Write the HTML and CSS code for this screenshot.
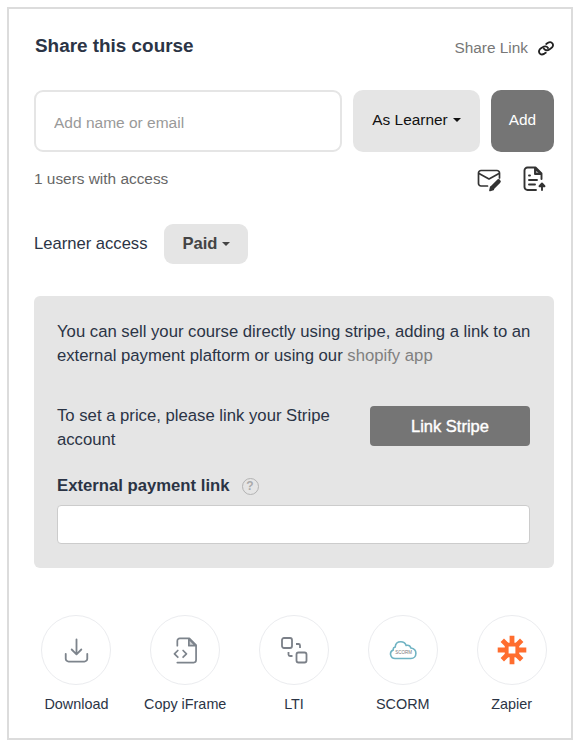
FILE: index.html
```html
<!DOCTYPE html>
<html lang="en">
<head>
    <meta charset="UTF-8">
    <meta name="viewport" content="width=device-width, initial-scale=1.0">
    <title>Share this course</title>
    <link rel="stylesheet" href="styles.css">
</head>
<body>
    <div class="share-card">
        <div class="header">
            <h1>Share this course</h1>
            <a class="share-link">
                <span>Share Link</span>
                <svg width="16" height="16" viewBox="0 0 24 24" fill="none" stroke="#222" stroke-width="2.8" stroke-linecap="round">
                    <path d="M9 13c1.500 2.600 5 3.200 8 1.200l2.500-1.700c3-2 3.800-5 2.200-7.300s-4.600-2.400-7.300-.6l-2 1.400"/>
                    <path d="M15 12c-1.500-2.600-5-3.200-8-1.200l-2.500 1.700c-3 2-3.800 5-2.200 7.300s4.600 2.400 7.300.6l2-1.400"/>
                </svg>
            </a>
        </div>

        <div class="invite">
            <input class="invite-input" type="text" placeholder="Add name or email">
            <button class="role-button">As Learner<span class="caret"></span></button>
            <button class="add-button">Add</button>
        </div>

        <div class="users">
            <span>1 users with access</span>
            <div class="users-actions">
                <svg width="26" height="26" viewBox="0 0 26 26" fill="none" stroke="#333" stroke-width="1.7" stroke-linecap="round" stroke-linejoin="round">
                    <path d="M11.500 20H5a2.500 2.500 0 0 1-2.500-2.500V7A2.500 2.500 0 0 1 5 4.500h16A2.500 2.500 0 0 1 23.500 7v5"/>
                    <path d="M3 7.500l10 5.500L23 7.500"/>
                    <path d="M16.500 21.500l6-6" stroke-width="4.500"/>
                    <path d="M14 24.500l.8-3.500 2.500 2.500z" fill="#333"/>
                </svg>
                <svg width="26" height="26" viewBox="0 0 26 26" fill="none" stroke="#333" stroke-width="1.9" stroke-linecap="round" stroke-linejoin="round">
                    <path d="M14 24H5.500a3 3 0 0 1-3-3V4.500a3 3 0 0 1 3-3h8l6 6v5.500"/>
                    <path d="M13 2v6h6z" fill="#333" fill-opacity=".5"/>
                    <path d="M7 9.500h1M7 14h8M7 18.500h6"/>
                    <path d="M20 24v-5"/>
                    <path d="M17.500 20.200l2.500-2.700 2.500 2.700z" fill="#333"/>
                </svg>
            </div>
        </div>

        <div class="access">
            <span>Learner access</span>
            <button class="access-button">Paid<span class="caret"></span></button>
        </div>

        <div class="payment">
            <p class="payment-info">You can sell your course directly using stripe, adding a link to an<br>external payment plaftorm or using our <a>shopify app</a></p>
            <div class="stripe">
                <p>To set a price, please link your Stripe<br>account</p>
                <button class="stripe-button">Link Stripe</button>
            </div>
            <div class="payment-label">
                <label for="payment-link">External payment link</label>
                <span class="help">?</span>
            </div>
            <input class="payment-input" id="payment-link" type="text">
        </div>

        <div class="exports">
            <div class="export-item">
                <div class="export-icon">
                    <svg width="25" height="26" viewBox="0 0 26 26" fill="none" stroke="#7d848c" stroke-width="1.900" stroke-linecap="round" stroke-linejoin="round">
                        <path d="M13 2v15M8 12.500l5 5 5-5"/>
                        <path d="M1.800 17v5a3 3 0 0 0 3 3h16.400a3 3 0 0 0 3-3v-5"/>
                    </svg>
                </div>
                <span>Download</span>
            </div>
            <div class="export-item">
                <div class="export-icon">
                    <svg width="25" height="27" viewBox="0 0 26 28" fill="none" stroke="#7d848c" stroke-width="1.800" stroke-linecap="round" stroke-linejoin="round">
                        <path d="M4.500 9V4a2.500 2.500 0 0 1 2.500-2.500h10l7 7V24a2.500 2.500 0 0 1-2.500 2.500H4.500"/>
                        <path d="M16.500 2v7h7z" fill="#7d848c" fill-opacity=".35"/>
                        <path d="M5 14l-3.500 3.500L5 21M10.500 14l3.500 3.500-3.500 3.500"/>
                    </svg>
                </div>
                <span>Copy iFrame</span>
            </div>
            <div class="export-item">
                <div class="export-icon">
                    <svg width="28" height="28" viewBox="0 0 28 28" fill="none" stroke="#7b8088" stroke-width="1.800">
                        <rect x="2" y="2" width="10" height="10" rx="2"/>
                        <rect x="16.500" y="16.500" width="10" height="10" rx="2"/>
                        <path d="M16 8h2.500a1.500 1.500 0 0 1 1.500 1.500V12M8.500 16v2.500A1.500 1.500 0 0 0 10 20h2.500"/>
                    </svg>
                </div>
                <span>LTI</span>
            </div>
            <div class="export-item">
                <div class="export-icon">
                    <svg width="28" height="20" viewBox="0 0 28 20" fill="none" stroke="#6fb3c3" stroke-width="1.600">
                        <path d="M6 18.500a4.500 4.500 0 0 1-1.800-8.600C4 8.500 4.700 7.400 6.200 7 6.500 3.800 8.800 1.800 11.800 1.800c2.600 0 4.500 1.400 5.300 3.600 2.300-.5 4.200.6 4.800 2.600 3 .4 5 2.400 5 5.200 0 3-2 5.300-5 5.300z"/>
                        <text x="14.500" y="13.500" class="cloud-text">SCORM</text>
                    </svg>
                </div>
                <span>SCORM</span>
            </div>
            <div class="export-item">
                <div class="export-icon">
                    <svg width="30" height="30" viewBox="0 0 30 30" fill="none" stroke="#ff6d2e" stroke-width="4.800">
                        <path d="M15 .7v9M15 20.300v9M.7 15h9M20.300 15h9M5.300 5.300l5.500 5.500M19.200 19.200l5.500 5.500M24.700 5.300l-5.500 5.500M10.800 19.200l-5.500 5.500"/>
                        <rect x="9.700" y="9.700" width="10.600" height="10.600" rx="1" stroke-width="3.800"/>
                    </svg>
                </div>
                <span>Zapier</span>
            </div>
        </div>
    </div>
</body>
</html>
```
FILE: styles.css
```css
* {
    margin: 0;
    padding: 0;
    box-sizing: border-box;
}

body {
    font-family: "Liberation Sans", Arial, sans-serif;
    font-size: 16.6px;
    background: #fff;
    color: #2b3445;
    padding: 7px;
}

button,
input {
    font-family: inherit;
    border: none;
}

.share-card {
    width: 566px;
    height: 733px;
    border: 2px solid #dcdcdc;
    padding: 25px 17px 0 25px;
}

.header {
    display: flex;
    justify-content: space-between;
    align-items: center;
    height: 24px;
}

.header h1 {
    font-size: 18.9px;
    margin-left: 1px;
}

.share-link {
    display: flex;
    align-items: center;
    gap: 10px;
    font-size: 15.4px;
    color: #777;
    padding-top: 3px;
}

.invite {
    display: flex;
    gap: 11px;
    margin-top: 32px;
    height: 62px;
}

.invite-input {
    width: 308px;
    border: 2px solid #e5e5e5;
    border-radius: 9px;
    padding: 4px 18px 0;
    font-size: 15.5px;
}

.invite-input::placeholder {
    color: #999;
}

.role-button {
    width: 127px;
    background: #e5e5e5;
    border-radius: 10px;
    font-size: 15.4px;
    color: #111;
    padding-bottom: 2px;
}

.caret {
    display: inline-block;
    border-top: 4.5px solid currentColor;
    border-left: 4.5px solid transparent;
    border-right: 4.5px solid transparent;
    margin-left: 5px;
    vertical-align: 3px;
}

.add-button {
    width: 63px;
    background: #757575;
    border-radius: 10px;
    color: #fff;
    font-size: 15.4px;
    padding-bottom: 2px;
}

.users {
    display: flex;
    justify-content: space-between;
    align-items: center;
    height: 28px;
    margin-top: 13px;
    font-size: 15.4px;
    color: #666;
}

.users-actions {
    display: flex;
    gap: 20px;
    padding-right: 6px;
}

.access {
    display: flex;
    align-items: center;
    gap: 17px;
    margin-top: 31px;
    height: 40px;
}

.access-button {
    width: 84px;
    height: 40px;
    background: #e5e5e5;
    border-radius: 9px;
    font-size: 16.6px;
    font-weight: bold;
    color: #444;
}

.payment {
    margin-top: 32px;
    height: 272px;
    background: #e5e5e5;
    border-radius: 6px;
    padding: 24px 24px 0 23px;
    font-size: 16.7px;
    line-height: 24px;
}

.payment-info {
    white-space: nowrap;
}

.payment-info a {
    color: #808080;
}

.stripe {
    display: flex;
    justify-content: space-between;
    align-items: flex-start;
    margin-top: 36px;
}

.stripe-button {
    width: 160px;
    height: 40px;
    margin-top: 2px;
    background: #757575;
    border-radius: 4px;
    color: #fff;
    font-size: 16.5px;
    -webkit-text-stroke: 0.4px #fff;
}

.payment-label {
    display: flex;
    align-items: center;
    gap: 12px;
    margin-top: 22px;
    font-weight: bold;
}

.help {
    width: 17px;
    height: 17px;
    border: 1.5px solid #b3b3b3;
    border-radius: 50%;
    color: #aaa;
    font-size: 12px;
    line-height: 15px;
    text-align: center;
}

.payment-input {
    display: block;
    width: 473px;
    height: 39px;
    margin-top: 7px;
    border: 1px solid #ccc;
    border-radius: 4px;
    background: #fff;
}

.exports {
    display: flex;
    justify-content: space-between;
    margin: 47px -12px 0;
}

.export-item {
    width: 109px;
    display: flex;
    flex-direction: column;
    align-items: center;
    font-size: 14.4px;
}

.export-icon {
    display: flex;
    align-items: center;
    justify-content: center;
    width: 70px;
    height: 70px;
    border: 1.5px solid #ebecef;
    border-radius: 50%;
    margin-bottom: 11px;
}

.cloud-text {
    font-size: 4.5px;
    fill: #777;
    stroke: none;
    text-anchor: middle;
}
```
